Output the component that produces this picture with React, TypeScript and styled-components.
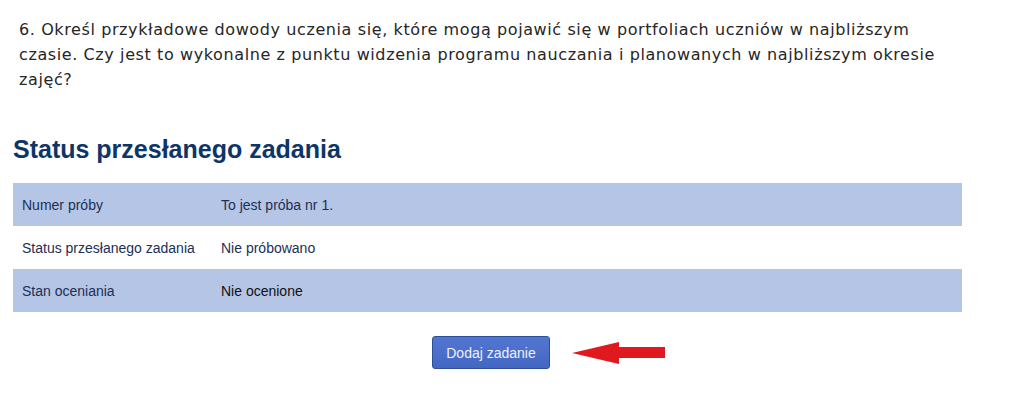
import React from "react"
import styled, { createGlobalStyle } from "styled-components"

const GlobalStyle = createGlobalStyle`
  html, body {
    margin: 0;
    padding: 0;
    background: #fff;
  }
`

const Page = styled.div`
  width: 1024px;
  height: 417px;
  overflow: hidden;
  padding: 0 62px 0 13px;
  box-sizing: border-box;
  font-family: Arial, "Liberation Sans", sans-serif;
`

const Question = styled.p`
  margin: 17px 0 0 6px;
  max-width: 925px;
  font-family: Tahoma, "DejaVu Sans", sans-serif;
  font-size: 16px;
  letter-spacing: 0.6px;
  line-height: 25px;
  color: #262626;
`

const Heading = styled.h2`
  margin: 42px 0 19px;
  font-size: 25px;
  line-height: 30px;
  font-weight: 700;
  color: #0e3567;
`

const Table = styled.div`
  display: flex;
  flex-direction: column;
  width: 949px;
`

const Row = styled.div<{ $shaded?: boolean }>`
  display: grid;
  grid-template-columns: 199px 1fr;
  align-items: center;
  height: 43px;
  padding-left: 9px;
  background: ${p => (p.$shaded ? "#b5c5e6" : "#fff")};
  font-size: 14px;
`

const Label = styled.span`
  color: #1c2f55;
`

const Value = styled.span<{ $dark?: boolean }>`
  color: ${p => (p.$dark ? "#111" : "#1c2f55")};
`

const Actions = styled.div`
  display: flex;
  align-items: center;
  gap: 22px;
  margin: 24px 0 0 419px;
`

const AddButton = styled.button`
  width: 118px;
  height: 33px;
  border: 1px solid #2f4f9a;
  border-radius: 3px;
  background: linear-gradient(#5176d0, #4567c4);
  color: #eef2fb;
  font-family: Arial, "Liberation Sans", sans-serif;
  font-size: 14px;
  cursor: pointer;
`

const Arrow = () => (
  <svg width="94" height="24" viewBox="0 0 94 24">
    <polygon points="0,12 47,1 47,6 93,6 93,17 47,17 47,23" fill="#e0191e" />
  </svg>
)

const rows = [
  { label: "Numer próby", value: "To jest próba nr 1.", shaded: true },
  { label: "Status przesłanego zadania", value: "Nie próbowano", shaded: false },
  { label: "Stan oceniania", value: "Nie ocenione", shaded: true, dark: true },
]

export default function App() {
  return (
    <>
      <GlobalStyle />
      <Page>
        <Question>
          6. Określ przykładowe dowody uczenia się, które mogą pojawić się w portfoliach uczniów w najbliższym
          czasie. Czy jest to wykonalne z punktu widzenia programu nauczania i planowanych w najbliższym okresie
          zajęć?
        </Question>
        <Heading>Status przesłanego zadania</Heading>
        <Table>
          {rows.map(r => (
            <Row key={r.label} $shaded={r.shaded}>
              <Label>{r.label}</Label>
              <Value $dark={r.dark}>{r.value}</Value>
            </Row>
          ))}
        </Table>
        <Actions>
          <AddButton>Dodaj zadanie</AddButton>
          <Arrow />
        </Actions>
      </Page>
    </>
  )
}
